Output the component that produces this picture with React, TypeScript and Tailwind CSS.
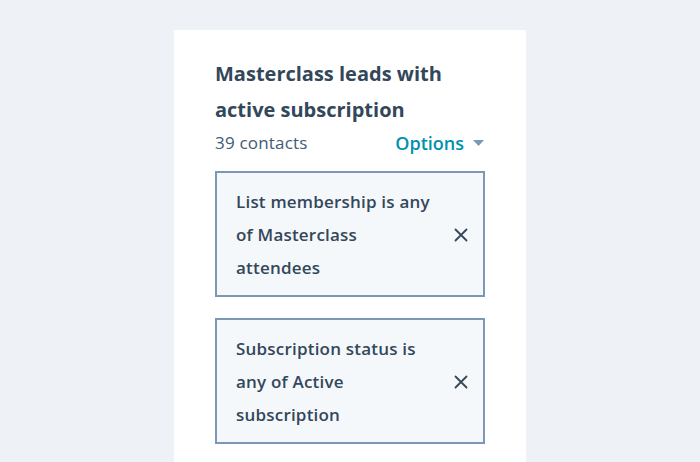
function Filter({ lines }: { lines: string[] }) {
  return (
    <div className="flex items-center justify-between border-2 border-[#7c98b6] bg-[#f5f8fa] pl-[19px] pr-[14px] pt-[12px] pb-[11px]">
      <p className="text-[17px] font-semibold leading-[33px] tracking-[0.2px] text-[#33475b]">
        {lines.map((l, i) => (
          <span key={i} className="block">
            {l}
          </span>
        ))}
      </p>
      <svg width="14" height="14" viewBox="0 0 14 14" className="mr-[1px]">
        <path d="M1.5 1.5 L12.5 12.5 M12.5 1.5 L1.5 12.5" stroke="#33475b" strokeWidth="1.8" strokeLinecap="round" />
      </svg>
    </div>
  );
}

export default function App() {
  return (
    <div
      className="h-[462px] w-[700px] overflow-hidden bg-[#eef2f6] pl-[174px] pt-[30px]"
      style={{ fontFamily: "'Open Sans', Lato, sans-serif" }}
    >
      <div className="h-[460px] w-[352px] bg-white px-[41px] pt-[26px]">
        {/* Header */}
        <h1 className="text-[20px] font-bold leading-[36px] text-[#33475b]">
          Masterclass leads with
          <br />
          active subscription
        </h1>
        <div className="flex items-center justify-between">
          <span className="text-[17px] leading-[30px] tracking-[0.2px] text-[#425b76]">39 contacts</span>
          <span className="flex items-center gap-[9px] text-[18px] font-semibold leading-[30px] text-[#0091ae]">
            Options
            <svg width="11" height="6" viewBox="0 0 11 6" className="mr-[1px]">
              <path d="M0 0 L11 0 L5.5 6 Z" fill="#7c98b6" />
            </svg>
          </span>
        </div>

        {/* Filters */}
        <div className="mt-[13px] flex flex-col gap-[21px]">
          <Filter lines={["List membership is any", "of Masterclass", "attendees"]} />
          <Filter lines={["Subscription status is", "any of Active", "subscription"]} />
        </div>
      </div>
    </div>
  );
}
